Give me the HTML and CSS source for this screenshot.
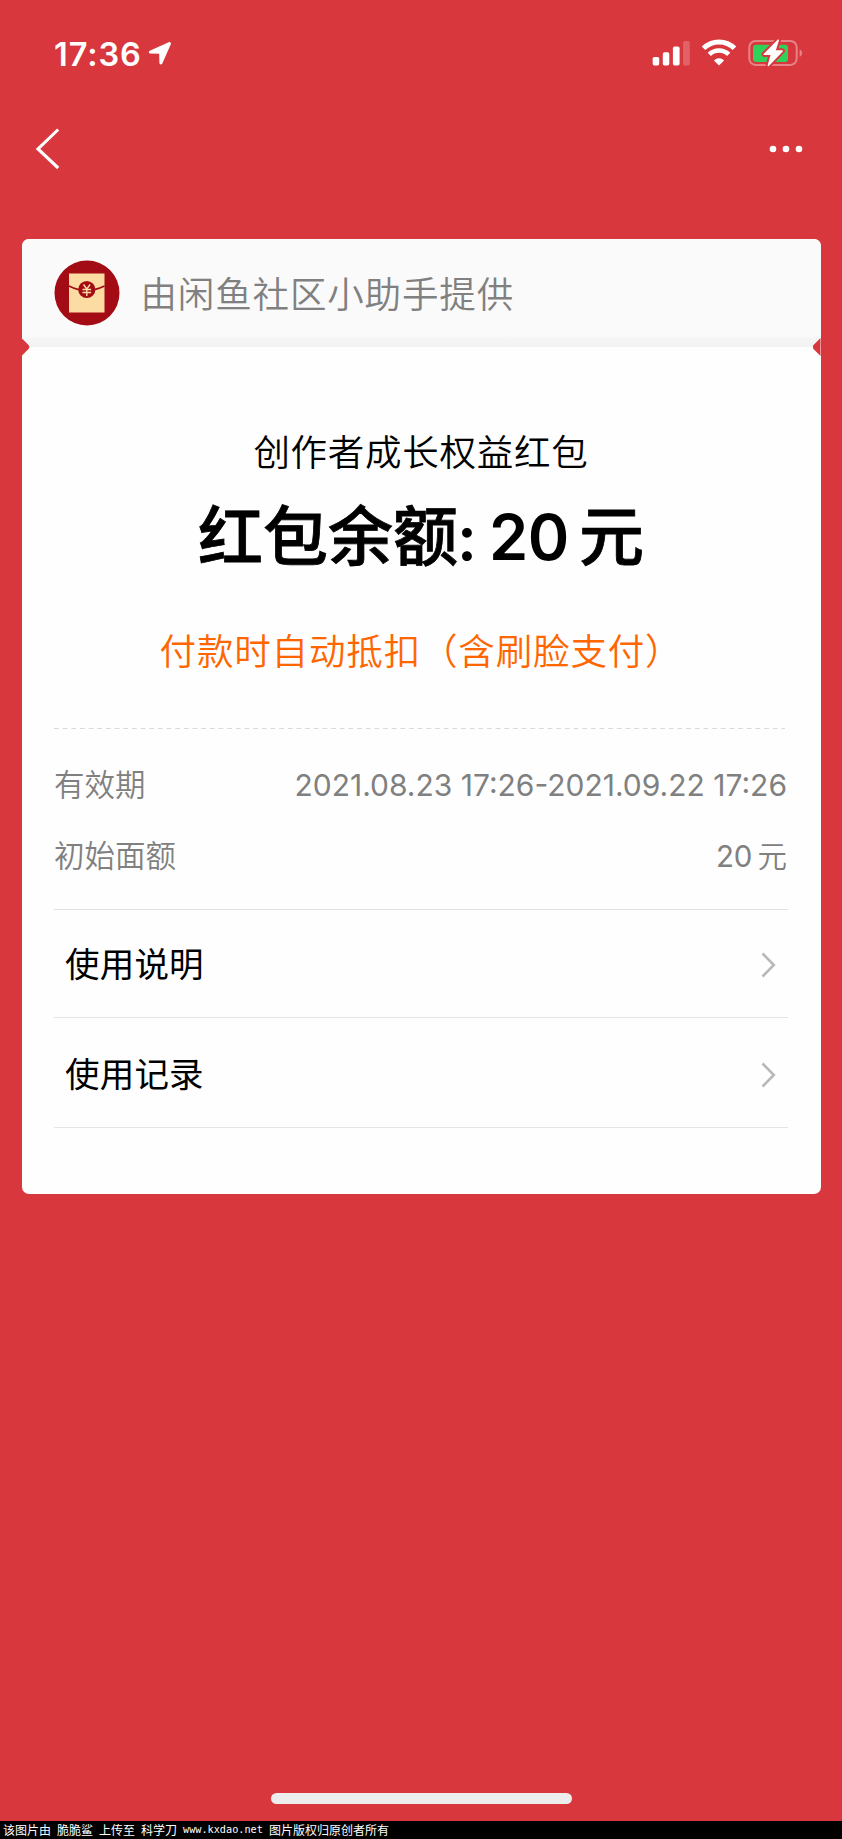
FILE: index.html
```html
<!DOCTYPE html>
<html lang="zh-CN">
<head>
<meta charset="utf-8">
<title>红包详情</title>
<link rel="stylesheet" href="styles.css">
</head>
<body>
<div class="screen">
  <div class="status-bar">
    <span class="clock">17:36</span>
    <svg class="location" width="24" height="24" viewBox="0 0 24 24"><path d="M20.7 1.2 1.8 9.8C.3 10.6.5 12.4 2 12.5l9.2.3.2 9.2c.1 1.7 2.1 2 2.9.4L22.8 3.2c.6-1.4-.7-2.6-2.1-2Z" fill="#fff"/></svg>
    <svg class="indicators" width="152" height="30" viewBox="0 0 152 30">
      <g fill="#fff">
        <rect x="0.7" y="18.9" width="6.5" height="8.6" rx="1.7"/>
        <rect x="10.8" y="14.2" width="6.5" height="13.3" rx="1.7"/>
        <rect x="20.9" y="8.6" width="6.7" height="18.9" rx="1.7"/>
        <rect x="31.1" y="3" width="6.7" height="24.5" rx="1.7" opacity=".22"/>
      </g>
      <g fill="none" stroke="#fff">
        <path d="M51.5 10.3a22 22 0 0 1 31 0" stroke-width="5"/>
        <path d="M57.3 16.4a14 14 0 0 1 19.4 0" stroke-width="4.7"/>
      </g>
      <path d="M67 27.6 61.9 22.4a7.4 7.4 0 0 1 10.2 0Z" fill="#fff"/>
      <rect x="97.3" y="2.9" width="47.4" height="24" rx="6.3" fill="none" stroke="#fff" stroke-width="2" opacity=".38"/>
      <path d="M147.6 11.4c3.3 1 3.3 6.2 0 7.3Z" fill="#fff" opacity=".38"/>
      <rect x="101" y="6.7" width="35" height="17.2" rx="3" fill="#30d158"/>
      <path d="M125.8 1.6 111.6 15.9q-.5 1 .7 1.1h6.2l-2.9 10.6q0 1.3 1.2.4l14-14.6q.6-1-.7-1.2h-6.2l3.1-9.9q.1-1.2-1.2-.7Z" fill="#fff" stroke="#d8373d" stroke-width="4" paint-order="stroke"/>
    </svg>
  </div>

  <div class="nav-bar">
    <svg width="26" height="42" viewBox="0 0 26 42"><path d="M24.2 1.500 4 21 24.200 40" fill="none" stroke="#fff" stroke-width="3.1"/></svg>
    <svg width="34" height="8" viewBox="0 0 34 8" fill="#fff"><circle cx="4" cy="4" r="3.3"/><circle cx="17" cy="4" r="3.3"/><circle cx="30" cy="4" r="3.3"/></svg>
  </div>

  <main class="card">
    <header class="provider">
      <svg class="avatar" width="66" height="66" viewBox="0 0 66 66">
        <circle cx="33" cy="33" r="32.5" fill="#a30c14"/>
        <rect x="15" y="13.5" width="35.5" height="39" fill="#fcdca3"/>
        <path d="M15 26q9 4.5 17.5 4.5T50.500 26" fill="none" stroke="#a30c14" stroke-width="1.9"/>
        <circle cx="32.800" cy="29.500" r="8.600" fill="#a30c14"/>
        <path d="m29.500 24.500 3.300 4.500 3.300-4.500M32.800 29v7M28.500 29.500h8.600M28.500 32.500h8.600" fill="none" stroke="#fcdca3" stroke-width="1.400"/>
      </svg>
      <span class="provider-name">由闲鱼社区小助手提供</span>
      <i class="notch notch-left"></i><i class="notch notch-right"></i>
    </header>
    <section class="summary">
      <div class="kind">创作者成长权益红包</div>
      <h1 class="balance"><span class="label">红包余额</span><span class="colon">:</span><span class="amount">20</span><span class="label">元</span></h1>
      <div class="hint">付款时自动抵扣（含刷脸支付）</div>
    </section>
    <svg class="dashes" width="731" height="1"><path d="M0 .5h731" stroke="#d9d9d9" stroke-dasharray="4.800 3.860"/></svg>
    <dl class="details">
      <div class="detail"><dt>有效期</dt><dd class="period">2021.08.23 17:26-2021.09.22 17:26</dd></div>
      <div class="detail"><dt>初始面额</dt><dd class="value"><span>20</span><span class="unit">元</span></dd></div>
    </dl>
    <nav class="links">
      <a class="link"><span>使用说明</span><svg width="16" height="26" viewBox="0 0 16 26"><path d="m1.500 1.500 11.300 11.500L1.500 24.500" fill="none" stroke="#b8b8b8" stroke-width="2.600"/></svg></a>
      <a class="link link-last"><span>使用记录</span><svg width="16" height="26" viewBox="0 0 16 26"><path d="m1.500 1.500 11.300 11.500L1.500 24.500" fill="none" stroke="#b8b8b8" stroke-width="2.600"/></svg></a>
    </nav>
  </main>
  <div class="home-indicator"></div>
</div>
<footer class="watermark"><span>该图片由</span><span>脆脆鲨</span><span>上传至</span><span>科学刀</span><span class="site">www.kxdao.net</span><span>图片版权归原创者所有</span></footer>
</body>
</html>
```
FILE: styles.css
```css
* { box-sizing: border-box; }

body {
  margin: 0;
  width: 842px;
  height: 1839px;
  overflow: hidden;
  display: flex;
  flex-direction: column;
  background: #000;
  font-family: Inter, "Noto Sans CJK SC", sans-serif;
}

.screen {
  height: 1821px;
  display: flex;
  flex-direction: column;
  background: #d8373d;
}

.status-bar {
  height: 108px;
  padding: 38px 38px 0 54px;
  display: flex;
  align-items: flex-start;
  color: #fff;
}

.clock {
  width: 94px;
  font-size: 32.5px;
  font-weight: 600;
  letter-spacing: .9px;
  line-height: 33px;
  white-space: nowrap;
}

.location { margin-top: 3px; }
.indicators { margin-left: auto; }

.nav-bar {
  height: 131px;
  padding: 20px 39px 0 34px;
  display: flex;
  justify-content: space-between;
  align-items: flex-start;
}

.nav-bar svg + svg { margin-top: 17px; }

.card {
  width: 799px;
  height: 955px;
  margin: 0 21.500px;
  border-radius: 7px;
  background: #fefefe;
  overflow: hidden;
}

.provider {
  position: relative;
  height: 108px;
  padding: 0 32px;
  display: flex;
  align-items: center;
  gap: 21px;
  background: linear-gradient(#fafafa 0 97px, #f5f5f5 100px, #f2f2f2);
}

.provider-name {
  padding-top: 3px;
  font-size: 36.500px;
  font-weight: 350;
  letter-spacing: .85px;
  line-height: 54px;
  color: #808080;
}

.notch {
  position: absolute;
  bottom: -9px;
  width: 8px;
  height: 18px;
  background: #d8373d;
}

.notch-left { left: 0; clip-path: polygon(0 0, 7px 7px, 8px 9px, 7px 11px, 0 18px); }
.notch-right { right: 0; clip-path: polygon(8px 0, 1px 7px, 0 9px, 1px 11px, 8px 18px); }

.summary {
  height: 381px;
  padding-top: 79px;
  display: flex;
  flex-direction: column;
  align-items: center;
}

.kind {
  font-size: 36.500px;
  font-weight: 350;
  letter-spacing: .75px;
  line-height: 54px;
  color: #000;
}

.balance {
  margin: 0;
  height: 112px;
  display: flex;
  align-items: baseline;
  font-size: 65px;
  font-weight: 500;
  line-height: 114px;
  white-space: nowrap;
  color: #000;
}

.label { -webkit-text-stroke: .8px #000; }
.colon { width: 32px; margin-left: -1px; font-size: 62.500px; font-weight: 600; }
.amount { width: 90px; font-size: 63px; font-weight: 600; letter-spacing: -.5px; }

.hint {
  font-size: 36.500px;
  font-weight: 350;
  letter-spacing: .85px;
  line-height: 121px;
  white-space: nowrap;
  color: #ff6600;
}

.dashes { display: block; margin-left: 32.500px; }

.details {
  margin: 0 32.500px;
  height: 181px;
  padding-top: 20px;
  border-bottom: 1px solid #e2e2e2;
}

.detail {
  height: 71px;
  display: flex;
  justify-content: space-between;
  align-items: center;
  font-size: 30.500px;
  font-weight: 350;
  line-height: 44px;
  color: #808080;
}

.detail dt { padding-top: 1px; }
.detail dd { margin: 0; padding-right: 1px; font-weight: 400; }
.period { font-size: 30px; white-space: nowrap; }
.value { display: flex; align-items: baseline; gap: 5px; font-size: 29.500px; }
.unit { font-weight: 350; }
.links { margin: 0 32.500px; }

.link {
  height: 108px;
  padding: 0 11px;
  display: flex;
  justify-content: space-between;
  align-items: center;
  border-bottom: 1px solid #e5e5e5;
  font-size: 34.500px;
  letter-spacing: .2px;
  line-height: 50px;
  color: #000;
}

.link span { padding-top: 3px; }
.link svg { margin-top: 3px; }
.link-last { height: 110px; }
.link-last span { padding-top: 5px; }
.link-last svg { margin-top: 4px; }

.home-indicator {
  width: 301px;
  height: 11px;
  margin: auto auto 17px;
  border-radius: 6px;
  background: #ededed;
}

.watermark {
  height: 18px;
  padding-left: 3px;
  display: flex;
  gap: 6px;
  font-family: "Noto Sans CJK SC", sans-serif;
  font-size: 12px;
  line-height: 17px;
  white-space: nowrap;
  color: #fff;
}

.site { width: 80px; font-family: "DejaVu Sans Mono", monospace; font-size: 10.200px; }
```
